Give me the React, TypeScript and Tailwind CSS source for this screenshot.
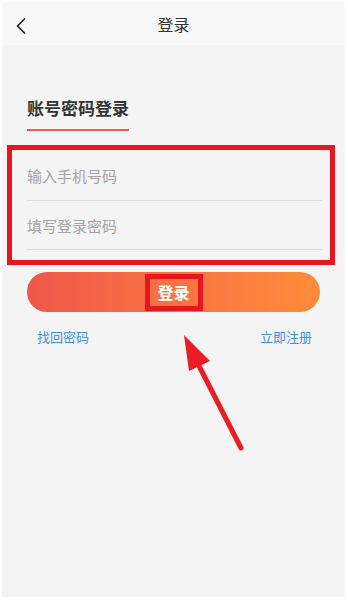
import { ChevronLeft } from "lucide-react";

const font = { fontFamily: '"Noto Sans CJK SC", "Noto Sans", sans-serif' };

export default function App() {
  return (
    <div
      className="relative w-[348px] h-[600px] bg-white pt-[2px] pl-[2px] pr-[3px] pb-[3px] overflow-hidden"
      style={font}
    >
      <div className="flex flex-col h-full bg-[#f4f4f4]">
        {/* header */}
        <div className="relative flex h-[43px] items-center justify-center bg-[#f8f8f8]">
          <ChevronLeft
            size={28}
            strokeWidth={1.5}
            className="absolute left-[5px] top-[10px] text-[#222]"
          />
          <span className="text-[16px] text-[#333]">登录</span>
        </div>

        {/* tab title */}
        <div className="mt-[51px] ml-[25px] flex">
          <div className="flex flex-col">
            <span className="text-[17px] font-bold leading-[24px] text-[#333]">
              账号密码登录
            </span>
            <div className="mt-[9px] h-[2px] bg-[#f0584c]" />
          </div>
        </div>

        {/* inputs (annotated) */}
        <div className="mt-[14px] ml-[5px] mr-[10px] border-[5px] border-[#e8161f] pl-[15px] pr-[8px]">
          <div className="flex h-[51px] items-end border-b border-[#dcdcdc] pb-[14px]">
            <span className="text-[15px] leading-[20px] text-[#a3a3a3]">
              输入手机号码
            </span>
          </div>
          <div className="flex h-[49px] items-end border-b border-[#dcdcdc] pb-[13px]">
            <span className="text-[15px] leading-[20px] text-[#a3a3a3]">
              填写登录密码
            </span>
          </div>
          <div className="h-[10px]" />
        </div>

        {/* button */}
        <div className="mt-[7px] mx-[25px] flex h-[40px] items-center justify-center rounded-full bg-gradient-to-r from-[#f0564a] to-[#ff8c38]">
          <div className="flex h-[37px] w-[58px] items-center justify-center border-[5px] border-[#e8161f]">
            <span className="text-[16px] font-bold leading-none text-white">
              登录
            </span>
          </div>
        </div>

        {/* links */}
        <div className="mt-[17px] flex justify-between pl-[35px] pr-[33px]">
          <span className="text-[13px] leading-[16px] text-[#3c8fe8]">找回密码</span>
          <span className="text-[13px] leading-[16px] text-[#3c8fe8]">立即注册</span>
        </div>
      </div>

      {/* annotation arrow */}
      <svg
        className="absolute left-0 top-0"
        width="348"
        height="600"
        viewBox="0 0 348 600"
      >
        <line
          x1="241"
          y1="448"
          x2="196"
          y2="360"
          stroke="#ec1c24"
          strokeWidth="5"
          strokeLinecap="round"
        />
        <polygon points="184,335 210,361 189,371" fill="#ec1c24" />
      </svg>
    </div>
  );
}
